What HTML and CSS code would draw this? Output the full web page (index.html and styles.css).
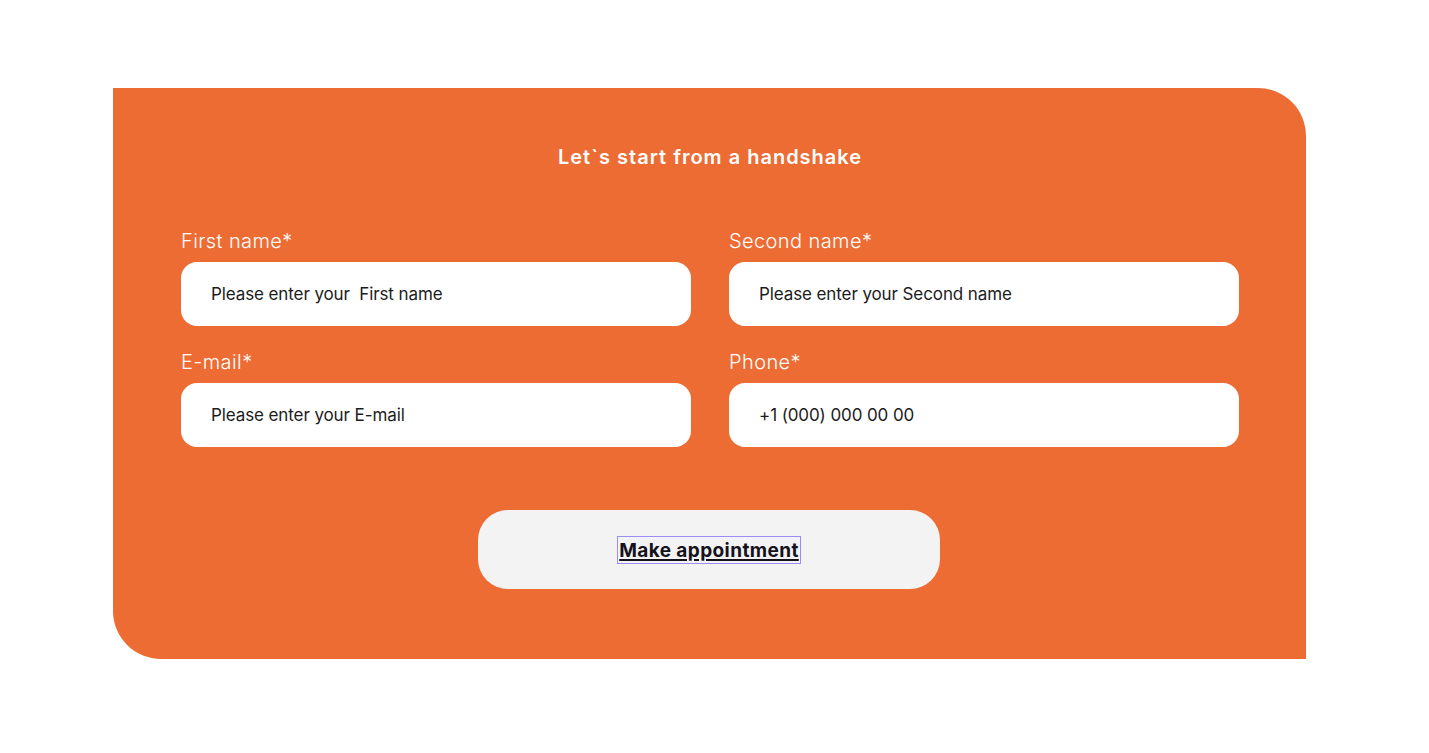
FILE: index.html
```html
<!DOCTYPE html>
<html lang="en">
<head>
<meta charset="utf-8">
<title>Handshake</title>
<link rel="stylesheet" href="styles.css">
</head>
<body>
<section class="card">
  <h2 class="title">Let`s start from a handshake</h2>
  <form class="form">
    <div class="grid">
      <label class="field">
        <span class="label">First name*</span>
        <span class="input">Please enter your&nbsp; First name</span>
      </label>
      <label class="field">
        <span class="label">Second name*</span>
        <span class="input">Please enter your Second name</span>
      </label>
      <label class="field">
        <span class="label">E-mail*</span>
        <span class="input">Please enter your E-mail</span>
      </label>
      <label class="field">
        <span class="label">Phone*</span>
        <span class="input">+1 (000) 000 00 00</span>
      </label>
    </div>
    <div class="actions">
      <button type="button" class="btn"><span class="btn-text">Make appointment</span></button>
    </div>
  </form>
</section>
</body>
</html>
```
FILE: styles.css
```css
* { box-sizing: border-box; }
body {
  margin: 0;
  background: #ffffff;
  font-family: Inter, "Noto Sans", sans-serif;
}
.card {
  margin: 88px 0 0 113px;
  width: 1193px;
  height: 571px;
  background: #ed6c34;
  border-radius: 0 48px 0 48px;
  padding: 57px 67px 70px 68px;
  display: flex;
  flex-direction: column;
}
.title {
  margin: 0;
  text-align: center;
  color: #ffffff;
  font-size: 20px;
  line-height: 24px;
  font-weight: 600;
  letter-spacing: 1px;
}
.form {
  margin-top: 60px;
  display: flex;
  flex-direction: column;
}
.grid {
  display: grid;
  grid-template-columns: 510px 510px;
  column-gap: 38px;
  row-gap: 24px;
}
.field {
  display: flex;
  flex-direction: column;
  gap: 9px;
}
.label {
  color: #ffffff;
  font-size: 20px;
  line-height: 24px;
  font-weight: 300;
  letter-spacing: 0.4px;
}
.input {
  height: 64px;
  background: #ffffff;
  border-radius: 16px;
  padding: 0 30px;
  display: flex;
  align-items: center;
  color: #1c1c1c;
  font-size: 17px;
  font-weight: 400;
  letter-spacing: -0.1px;
}
.actions {
  margin-top: 63px;
  display: flex;
  justify-content: center;
  padding-right: 2px;
}
.btn {
  width: 462px;
  height: 79px;
  border: none;
  border-radius: 30px;
  background: #f3f3f3;
  display: flex;
  align-items: center;
  justify-content: center;
  font-family: inherit;
  cursor: pointer;
}
.btn-text {
  display: inline-block;
  border: 1.5px solid #9b8cf7;
  padding: 1px 1px 0;
  line-height: 25px;
  font-size: 19px;
  font-weight: 700;
  color: #15121c;
  text-decoration: underline;
  text-decoration-thickness: 1.5px;
  text-underline-offset: 2px;
  letter-spacing: 0.4px;
}
```
